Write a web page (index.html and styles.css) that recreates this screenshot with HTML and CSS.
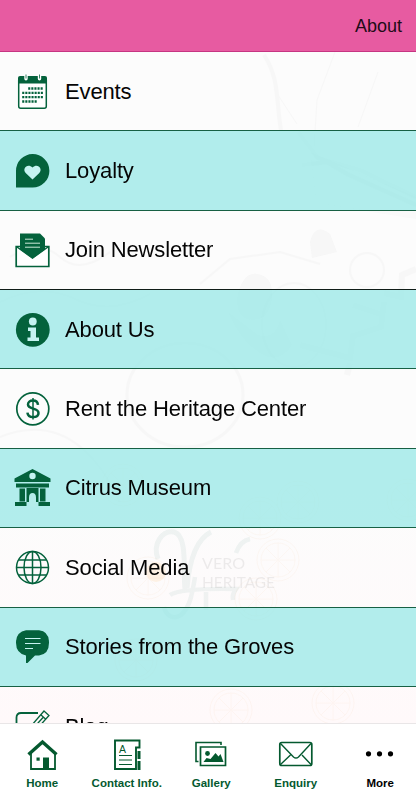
FILE: index.html
```html
<!DOCTYPE html>
<html lang="en">
<head>
  <meta charset="UTF-8" />
  <meta name="viewport" content="width=device-width, initial-scale=1" />
  <title>More</title>
  <link rel="stylesheet" href="styles.css">
</head>
<body>
  <div class="app">
    <header class="top-bar"><a class="about">About</a></header>

    <main class="menu">
      <svg class="backdrop" viewBox="0 0 416 672" fill="none" aria-hidden="true">
        <!-- grove workers and baskets -->
        <g stroke="#777" opacity=".03">
          <path d="M264 3c16 24 12 48 17 75M298 80l20 26 42 12 56 27M302 113l25-3 20 12 40 18 29 13" stroke-width="4"/>
          <path d="M274 37l23 35M335 0l-18 48-3 48M378 20l-20 55" stroke-width="1"/>
          <path d="M0 250q40-20 75-3t75-5M10 205q30-18 50 0t50-5M200 232l30-25 50-7 40 12" stroke-width="2"/>
          <ellipse cx="185" cy="343" rx="58" ry="52" stroke-width="3"/>
          <ellipse cx="294" cy="273" rx="32" ry="42" stroke-width="2"/>
          <circle cx="367" cy="218" r="17" stroke-width="2"/>
          <path d="M300 293l50 13 3-22 28-9 3-25M353 253l30 10M384 241l17 4 1-22 14-6M350 311l-3 12" stroke-width="6"/>
          <path d="M0 385q75-30 120 65" stroke-width="2"/>
        </g>
        <g fill="#777" opacity=".04">
          <path d="M237 247q5-27 20-25t15 20q0 20-13 25-22 5-22-20zM228 260q15 35 40 45 15 3 24-12l-12-25q-5 20-22 15zM310 190q5-20 20-8l7 18-25 6z"/>
          <path d="M310 100l106 45v22l-100-16z" opacity=".6"/>
        </g>
        <!-- citrus slices -->
        <g stroke="#e8a860" opacity=".06">
          <g id="slice"><circle cx="278" cy="508" r="21"/><circle cx="278" cy="508" r="17"/><path d="M278 491v34M261 508h34M266 496l24 24M290 496l-24 24"/></g>
          <use href="#slice" x="-130" y="18"/>
          <use href="#slice" x="-22" y="39"/>
          <use href="#slice" x="-155" y="-75"/>
          <use href="#slice" x="20" y="-58"/>
          <use href="#slice" x="130" y="-60"/>
          <use href="#slice" x="-18" y="-42"/>
          <use href="#slice" x="-142" y="100"/>
          <use href="#slice" x="55" y="143"/>
          <use href="#slice" x="-47" y="150"/>
        </g>
        <!-- logo -->
        <g stroke="#4d8f86" opacity=".08">
          <path d="M158 507c-6-16 5-29 16-27 14 3 9 40 11 57M187 536c2-24 8-48 24-56" stroke-width="5"/>
          <path d="M236 501q4-12 14-14M195 525c-3 18-5 30-14 38-7 5-15 1-17-8M170 543q10-7 66-6-4 5-3 11M206 540v18" stroke-width="4.500"/>
        </g>
        <circle cx="156" cy="520" r="10" fill="#ff9a20" opacity=".1"/>
        <g class="brand">
          <text x="202" y="517" textLength="43" lengthAdjust="spacingAndGlyphs">VERO</text>
          <text x="202" y="536" textLength="73" lengthAdjust="spacingAndGlyphs">HERITAGE</text>
        </g>
      </svg>

      <a class="row">
        <svg class="icon" viewBox="0 0 36 36">
          <rect x="4.700" y="3.700" width="27.600" height="30.600" rx="2" fill="#fff" stroke="currentColor" stroke-width="1.500"/>
          <path d="M4 9.500V4q0-2 2-2h25q2 0 2 2v5.500z" fill="currentColor"/>
          <path d="M12 1v3.800M25.500 1v3.800" stroke="#fff" stroke-width="3.400" stroke-linecap="round"/>
          <path d="M12 .5v4M25.500 .5v4" stroke="currentColor" stroke-width=".8"/>
          <path d="M14.200 14.500h15M8.200 18.900h21M8.200 23.200h21M8.200 27.500h15" stroke="currentColor" stroke-width="2.300" stroke-dasharray="2.100 1"/>
        </svg>
        <span>Events</span>
      </a>
      <a class="row tinted">
        <svg class="icon" viewBox="0 0 36 36">
          <path d="M2 34.500V18a16.700 16.700 0 1 1 16.700 16.500z" fill="currentColor"/>
          <path d="M18.500 26.500L11.700 20c-4-4.500 1.800-10.200 6.800-5.600 5-4.600 10.800 1.100 6.800 5.600z" fill="#c5f3f1"/>
        </svg>
        <span>Loyalty</span>
      </a>
      <a class="row">
        <svg class="icon" viewBox="0 -1 36 36">
          <path d="M2.200 13.500h32.600v20H2.200z" fill="#fff" stroke="currentColor" stroke-width="1.700"/>
          <path d="M6 .5h20l5 5v11l-12.500 9L6 16.500z" fill="currentColor"/>
          <path d="M3 14l15.500 11L34 14" fill="none" stroke="currentColor" stroke-width="1.500"/>
          <path d="M11 6.200h8M11 10.200h15M11 14.200h15" stroke="#cde9d9" stroke-width="1"/>
        </svg>
        <span>Join Newsletter</span>
      </a>
      <a class="row tinted">
        <svg class="icon" viewBox="0 0 36 36">
          <circle cx="18.800" cy="17.800" r="16.900" fill="currentColor"/>
          <circle cx="18.800" cy="9.500" r="3.900" fill="#c5f3f1"/>
          <path d="M14 15.500h8v10h3V29H13.500v-3.500h3V19H14z" fill="#c5f3f1"/>
        </svg>
        <span>About Us</span>
      </a>
      <a class="row">
        <svg class="icon" viewBox="0 0 36 36" fill="none" stroke="currentColor">
          <circle cx="18.800" cy="17.800" r="16" stroke-width="1.700"/>
          <path d="M24 13.800c-.4-3-2.200-4.200-5-4.200-3.200 0-5 1.400-5 3.900 0 5.500 10.500 2.700 10.500 8.400 0 2.700-2 4.200-5.500 4.200-3.300 0-5.200-1.500-5.600-4.500" stroke-width="2.500"/>
          <path d="M19 7v21.500" stroke-width="1.500"/>
        </svg>
        <span>Rent the Heritage Center</span>
      </a>
      <a class="row tinted">
        <svg class="icon" viewBox="0 -.5 36 36">
          <path d="M18.500 -1.500L36.500 8v3.500H.5V8zM2 13h33v4H2zM5.500 18h5.500v13H5.500zM26 18h5.500v13H26zM1 31.500h11.500v4H1zM24.500 31.500H36v4H24.500zM12.500 17.500h12v14h-12z" fill="currentColor"/>
          <circle cx="18.500" cy="5.500" r="3.200" fill="#c5f3f1"/>
          <path d="M15 36v-9q0-4.500 3.500-4.500T22 27v9z" fill="#b5edeb"/>
        </svg>
        <span>Citrus Museum</span>
      </a>
      <a class="row">
        <svg class="icon" viewBox="0 0 36 36" fill="none" stroke="currentColor" stroke-width="1.500">
          <circle cx="18.500" cy="17.500" r="16"/>
          <ellipse cx="18.500" cy="17.500" rx="8.500" ry="16"/>
          <path d="M18.500 1.500v32M2.500 17.500h32M5 10.100h27M5 24.900h27"/>
        </svg>
        <span>Social Media</span>
      </a>
      <a class="row tinted">
        <svg class="icon" viewBox="0 -.5 36 36">
          <path d="M12 .8h13q10 1 10 12.500T25 26h-4l-7.500 7.500H12V26Q2 24 2 13.300T12 .8z" fill="currentColor"/>
          <path d="M11 9h15.500M11 14h15.500M11 19h8" stroke="#c5f3f1" stroke-width="1.100"/>
        </svg>
        <span>Stories from the Groves</span>
      </a>
      <a class="row">
        <svg class="icon" viewBox="0 0 36 36" fill="none" stroke="currentColor">
          <path d="M24 4H7Q2.500 4 2.500 8.500V29q0 3 4 3H25q4 0 4-4V18" stroke-width="1.800"/>
          <path d="M30 2l5 4.500-17 19-6 2 2-7zM26.500 5.500l5 4.500M29 8.500L15 24" stroke-width="1.300"/>
        </svg>
        <span>Blog</span>
      </a>
    </main>

    <nav class="tab-bar">
      <a class="tab">
        <svg viewBox="0 0 36 36" fill="none" stroke="currentColor">
          <path d="M7 16v16h24V16" stroke-width="1.800"/>
          <path d="M4.500 17.500L18.500 5 32.500 17.500" stroke-width="3.400"/>
          <path d="M19 20.500h6V32h-6z" fill="currentColor" stroke="none"/>
          <path d="M12.500 20.500h3.200v3.200h-3.200z" fill="currentColor" stroke="none"/>
        </svg>
        <span>Home</span>
      </a>
      <a class="tab">
        <svg viewBox="0 0 36 36" fill="none" stroke="currentColor">
          <path d="M6 3.500h24.500v7H27V32H6z" stroke-width="1.900"/>
          <path d="M30 14v8M30 24v9" stroke-width="3"/>
          <path d="M10 18.500h13M10 23h13M10 27.500h13" stroke-width="1"/>
          <text x="10" y="15.500" font-size="10.500" fill="currentColor" stroke="none">A</text>
        </svg>
        <span>Contact Info.</span>
      </a>
      <a class="tab">
        <svg viewBox="0 0 36 36" fill="none" stroke="currentColor">
          <path d="M5.500 24.500H3V5.500h25V8" stroke-width="1.600"/>
          <path d="M7.500 10h25v18.500h-25z" stroke-width="1.700"/>
          <circle cx="14.500" cy="16.500" r="2.400" fill="currentColor" stroke="none"/>
          <path d="M10.500 25l3-4 4 1 5-6 3 3.500 2-2.500 3 8z" fill="currentColor" stroke="none"/>
        </svg>
        <span>Gallery</span>
      </a>
      <a class="tab">
        <svg viewBox="0 0 36 36" fill="none" stroke="currentColor" stroke-width="1.700">
          <rect x="1.800" y="5.500" width="32" height="23" rx="2"/>
          <path d="M2.500 6.500L15.500 20q2.500 2.200 5 0L33 6.500M2.500 27.500l10-9.500M33 27.500l-9-9.500" stroke-width="1.400"/>
        </svg>
        <span>Enquiry</span>
      </a>
      <a class="tab active">
        <svg viewBox="0 0 36 36" fill="currentColor">
          <circle cx="6.500" cy="16.800" r="2.600"/>
          <circle cx="17.500" cy="16.800" r="2.600"/>
          <circle cx="28.500" cy="16.800" r="2.600"/>
        </svg>
        <span>More</span>
      </a>
    </nav>
  </div>
</body>
</html>
```

FILE: styles.css
```css
* {
  box-sizing: border-box;
}

body {
  margin: 0;
  font-family: "Liberation Sans", Arial, sans-serif;
  color: #050505;
}

.app {
  height: 100vh;
  display: flex;
  flex-direction: column;
  overflow: hidden;
}

.top-bar {
  height: 52px;
  flex: none;
  display: flex;
  align-items: center;
  justify-content: flex-end;
  padding: 2px 14px 0 0;
  background: #e75ba1;
  border-bottom: 1px solid #c63582;
}

.about {
  font-size: 18px;
  color: #210b17;
}

.menu {
  position: relative;
  flex: 1;
  min-height: 0;
  overflow: hidden;
  background: linear-gradient(#fcfcfc, #fcfcfc 65%, #fff9fa);
}

/* faint artwork behind the rows */
.backdrop {
  position: absolute;
  top: 0;
  left: 0;
  width: 416px;
  height: 672px;
}

.brand {
  font-family: Lato, sans-serif;
  font-size: 16px;
  fill: #777;
  opacity: 0.12;
}

.row {
  position: relative;
  height: 79.36px;
  display: flex;
  align-items: center;
  gap: 15px;
  padding: 1px 0 0 14px;
  border-bottom: 1px solid #176044;
  font-size: 22px;
  letter-spacing: -0.14px;
}

.row:nth-of-type(3) {
  border-color: #101d18;
}

.tinted {
  background: rgba(148, 232, 230, 0.72);
}

.icon {
  width: 36px;
  height: 36px;
  flex: none;
  color: #04623c;
  overflow: visible;
}

.tab-bar {
  height: 77px;
  flex: none;
  display: grid;
  grid-template-columns: repeat(5, 84.5px);
  background: #fff;
  border-top: 1px solid #e9e6e7;
}

.tab {
  display: flex;
  flex-direction: column;
  align-items: center;
  padding-top: 13px;
  gap: 4px;
  color: #04592f;
  font-size: 11.5px;
  font-weight: bold;
  line-height: 13px;
  white-space: nowrap;
}

.tab svg {
  width: 36px;
  height: 36px;
}

.tab text {
  font-weight: normal;
}

.active {
  color: #000;
}
```
